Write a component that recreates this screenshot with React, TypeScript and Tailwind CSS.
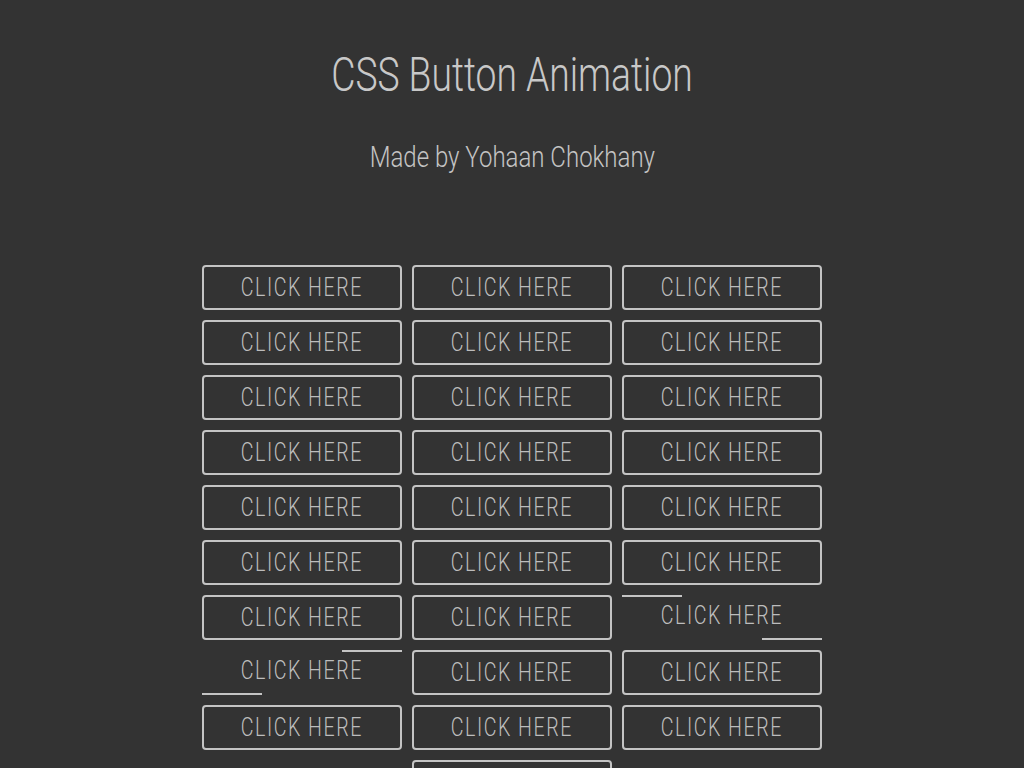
const COLUMNS: { count: number; animated?: { row: number; variant: "a" | "b" } }[] = [
  { count: 9, animated: { row: 7, variant: "b" } },
  { count: 10 },
  { count: 9, animated: { row: 6, variant: "a" } },
];

function ClickButton({ variant }: { variant?: "a" | "b" }) {
  if (variant) {
    // mid-animation: border gone, two sliding bars along top and bottom
    return (
      <div className="relative m-[5px] flex h-[45px] w-[200px] items-center justify-center">
        <span
          className={
            variant === "a"
              ? "absolute left-0 top-0 h-[2px] w-[60px] bg-[#c4c4c4]"
              : "absolute right-0 top-0 h-[2px] w-[60px] bg-[#c4c4c4]"
          }
        />
        <span
          className={
            variant === "a"
              ? "absolute bottom-0 right-0 h-[2px] w-[60px] bg-[#c4c4c4]"
              : "absolute bottom-0 left-0 h-[2px] w-[60px] bg-[#c4c4c4]"
          }
        />
        <span className="-mt-[4px] inline-block scale-x-[0.755] text-[26px] font-light tracking-[2px] text-[#bdbdbd]">
          CLICK HERE
        </span>
      </div>
    );
  }
  return (
    <div className="m-[5px] flex h-[45px] w-[200px] items-center justify-center rounded-[4px] border-2 border-[#c4c4c4]">
      <span className="inline-block scale-x-[0.755] text-[26px] font-light tracking-[2px] text-[#bdbdbd]">
        CLICK HERE
      </span>
    </div>
  );
}

export default function App() {
  return (
    <div
      className="h-screen overflow-hidden bg-[#333333] text-center"
      style={{ fontFamily: "Roboto, sans-serif" }}
    >
      <h1 className="pt-[45px] leading-[60px]">
        <span className="inline-block scale-x-[0.776] text-[48px] font-light text-[#c8c8c8]">
          CSS Button Animation
        </span>
      </h1>
      <p className="mt-[21px] leading-[40px]">
        <span className="inline-block scale-x-[0.8] text-[30px] font-light text-[#c4c4c4]">
          Made by Yohaan Chokhany
        </span>
      </p>
      <div className="mt-[78px] flex justify-center">
        {COLUMNS.map((col, ci) => (
          <div key={ci} className="flex flex-col">
            {Array.from({ length: col.count }).map((_, ri) => (
              <ClickButton
                key={ri}
                variant={col.animated && col.animated.row === ri ? col.animated.variant : undefined}
              />
            ))}
          </div>
        ))}
      </div>
    </div>
  );
}
